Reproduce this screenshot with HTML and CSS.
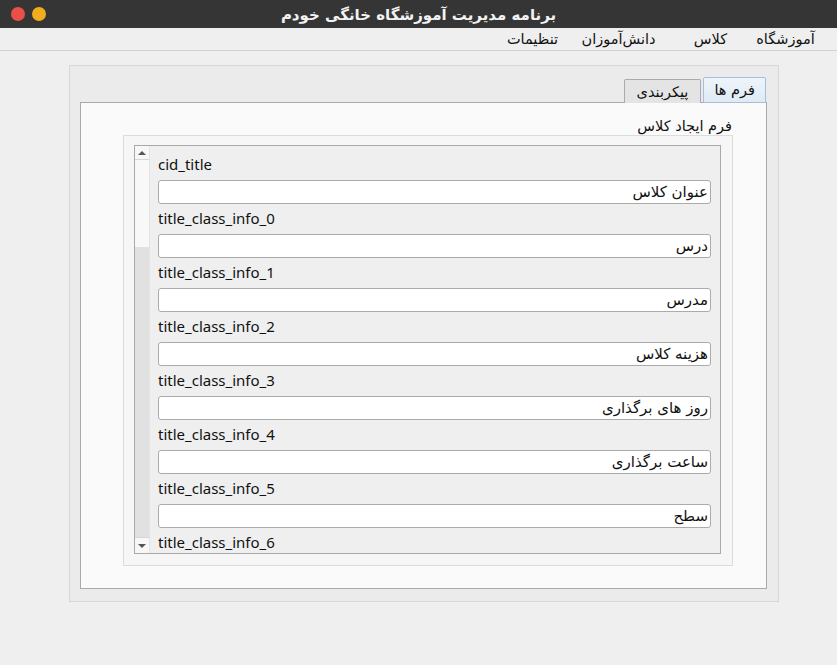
FILE: index.html
```html
<!DOCTYPE html>
<html lang="fa">
<head>
<meta charset="utf-8">
<title>برنامه مدیریت آموزشگاه خانگی خودم</title>
<link rel="stylesheet" href="styles.css">
</head>
<body>
<div class="titlebar">
  <div class="dots"><span class="dot red"></span><span class="dot yellow"></span></div>
  <div class="title" dir="rtl">برنامه مدیریت آموزشگاه خانگی خودم</div>
  <div></div>
</div>
<div class="menubar" dir="rtl">
  <span class="menu-item m1">آموزشگاه</span>
  <span class="menu-item m2">کلاس</span>
  <span class="menu-item m3">دانش‌آموزان</span>
  <span class="menu-item m4">تنظیمات</span>
</div>
<div class="main">
  <div class="frame">
    <div class="tabs" dir="rtl">
      <div class="tab active">فرم ها</div>
      <div class="tab">پیکربندی</div>
    </div>
    <div class="pane">
      <div class="group-title" dir="rtl">فرم ایجاد کلاس</div>
      <div class="group">
        <div class="scroll">
          <div class="scrollbar">
            <div class="sb-btn"><span class="arrow up"></span></div>
            <div class="sb-handle"></div>
            <div class="sb-track"></div>
            <div class="sb-btn bottom"><span class="arrow down"></span></div>
          </div>
          <div class="content">
            <div class="field"><div class="label">cid_title</div><div class="input" dir="rtl">عنوان کلاس</div></div>
            <div class="field"><div class="label">title_class_info_0</div><div class="input" dir="rtl">درس</div></div>
            <div class="field"><div class="label">title_class_info_1</div><div class="input" dir="rtl">مدرس</div></div>
            <div class="field"><div class="label">title_class_info_2</div><div class="input" dir="rtl">هزینه کلاس</div></div>
            <div class="field"><div class="label">title_class_info_3</div><div class="input" dir="rtl">روز های برگذاری</div></div>
            <div class="field"><div class="label">title_class_info_4</div><div class="input" dir="rtl">ساعت برگذاری</div></div>
            <div class="field"><div class="label">title_class_info_5</div><div class="input" dir="rtl">سطح</div></div>
            <div class="field"><div class="label">title_class_info_6</div><div class="input" dir="rtl"></div></div>
          </div>
        </div>
      </div>
    </div>
  </div>
</div>
</body>
</html>
```

FILE: styles.css
```css
* { box-sizing: border-box; }
html, body { margin: 0; padding: 0; }
body {
  width: 837px;
  height: 665px;
  overflow: hidden;
  background: #efefef;
  font-family: "DejaVu Sans", "Noto Sans", sans-serif;
  font-size: 15px;
  color: #111;
}
.titlebar {
  height: 28px;
  background: #353535;
  display: grid;
  grid-template-columns: 1fr auto 1fr;
  align-items: center;
}
.dots { display: flex; gap: 7px; padding-left: 11px; }
.dot { width: 14px; height: 14px; border-radius: 50%; display: block; }
.red { background: #e9504a; }
.yellow { background: #f0ad1e; }
.title {
  color: #f2f2f2;
  font-weight: bold;
  font-size: 15px;
  padding-top: 1px;
}
.menubar {
  height: 23px;
  border-bottom: 1px solid #d2d2d2;
  display: flex;
  align-items: center;
  padding-right: 14px;
  font-size: 14.5px;
}
.menu-item { text-align: center; display: block; }
.m1 { width: 75px; }
.m2 { width: 75px; }
.m3 { width: 109px; }
.m4 { width: 63px; }
.main { padding: 14px 0 0 69px; }
.frame {
  width: 710px;
  height: 537px;
  border: 1px solid #d8d8d8;
  background: #ebebeb;
  padding: 11px 11px 12px 10px;
  display: flex;
  flex-direction: column;
}
.tabs {
  display: flex;
  align-items: flex-end;
  height: 26px;
  flex: none;
  padding-right: 1px;
  gap: 2px;
  margin-bottom: -1px;
  position: relative;
  z-index: 1;
}
.tab {
  height: 24px;
  border: 1px solid #ababab;
  border-bottom: none;
  border-radius: 2px 2px 0 0;
  background: #e4e4e4;
  padding: 0 12px;
  display: flex;
  align-items: center;
  font-size: 14.5px;
}
.tab.active {
  height: 26px;
  background: linear-gradient(#eef4fb, #dfeaf5);
  border: 1px solid #a6c0da;
  padding: 0 10px;
}
.pane {
  flex: 1;
  min-height: 0;
  border: 1px solid #a9a9a9;
  background: #fafafa;
  display: flex;
  flex-direction: column;
  padding: 13px 33px 22px 42px;
}
.group-title {
  flex: none;
  text-align: right;
  font-size: 14.5px;
  height: 19px;
  line-height: 21px;
  margin-right: 1px;
}
.group {
  flex: 1;
  min-height: 0;
  border: 1px solid #dcdcdc;
  background: #f6f6f6;
  padding: 9px 11px 11px 10px;
  display: flex;
}
.scroll {
  flex: 1;
  min-height: 0;
  border: 1px solid #a9a9a9;
  background: #efefef;
  display: flex;
  overflow: hidden;
}
.scrollbar {
  width: 15px;
  flex: none;
  display: flex;
  flex-direction: column;
  border-right: 1px solid #e4e4e4;
}
.sb-btn {
  height: 14px;
  flex: none;
  background: #f7f7f7;
  border-bottom: 1px solid #d6d6d6;
  display: flex;
  align-items: center;
  justify-content: center;
}
.sb-btn.bottom { border-bottom: none; border-top: 1px solid #d6d6d6; height: 16px; }
.arrow { width: 0; height: 0; border-left: 4px solid transparent; border-right: 4px solid transparent; }
.arrow.up { border-bottom: 4px solid #555; }
.arrow.down { border-top: 4px solid #555; }
.sb-handle { height: 87px; flex: none; background: #f8f8f8; }
.sb-track { flex: 1; background: #e1e1e1; }
.content {
  flex: 1;
  min-height: 0;
  overflow: hidden;
  padding: 4px 9px 0 8px;
}
.field { display: flex; flex-direction: column; }
.label {
  font-family: "Noto Sans", "DejaVu Sans", sans-serif;
  font-size: 15px;
  height: 30px;
  line-height: 28px;
  color: #111;
}
.input {
  height: 24px;
  background: #fff;
  border: 1px solid #ababab;
  border-radius: 3px;
  text-align: right;
  padding: 0 2px;
  line-height: 22px;
  font-size: 15px;
}
```
